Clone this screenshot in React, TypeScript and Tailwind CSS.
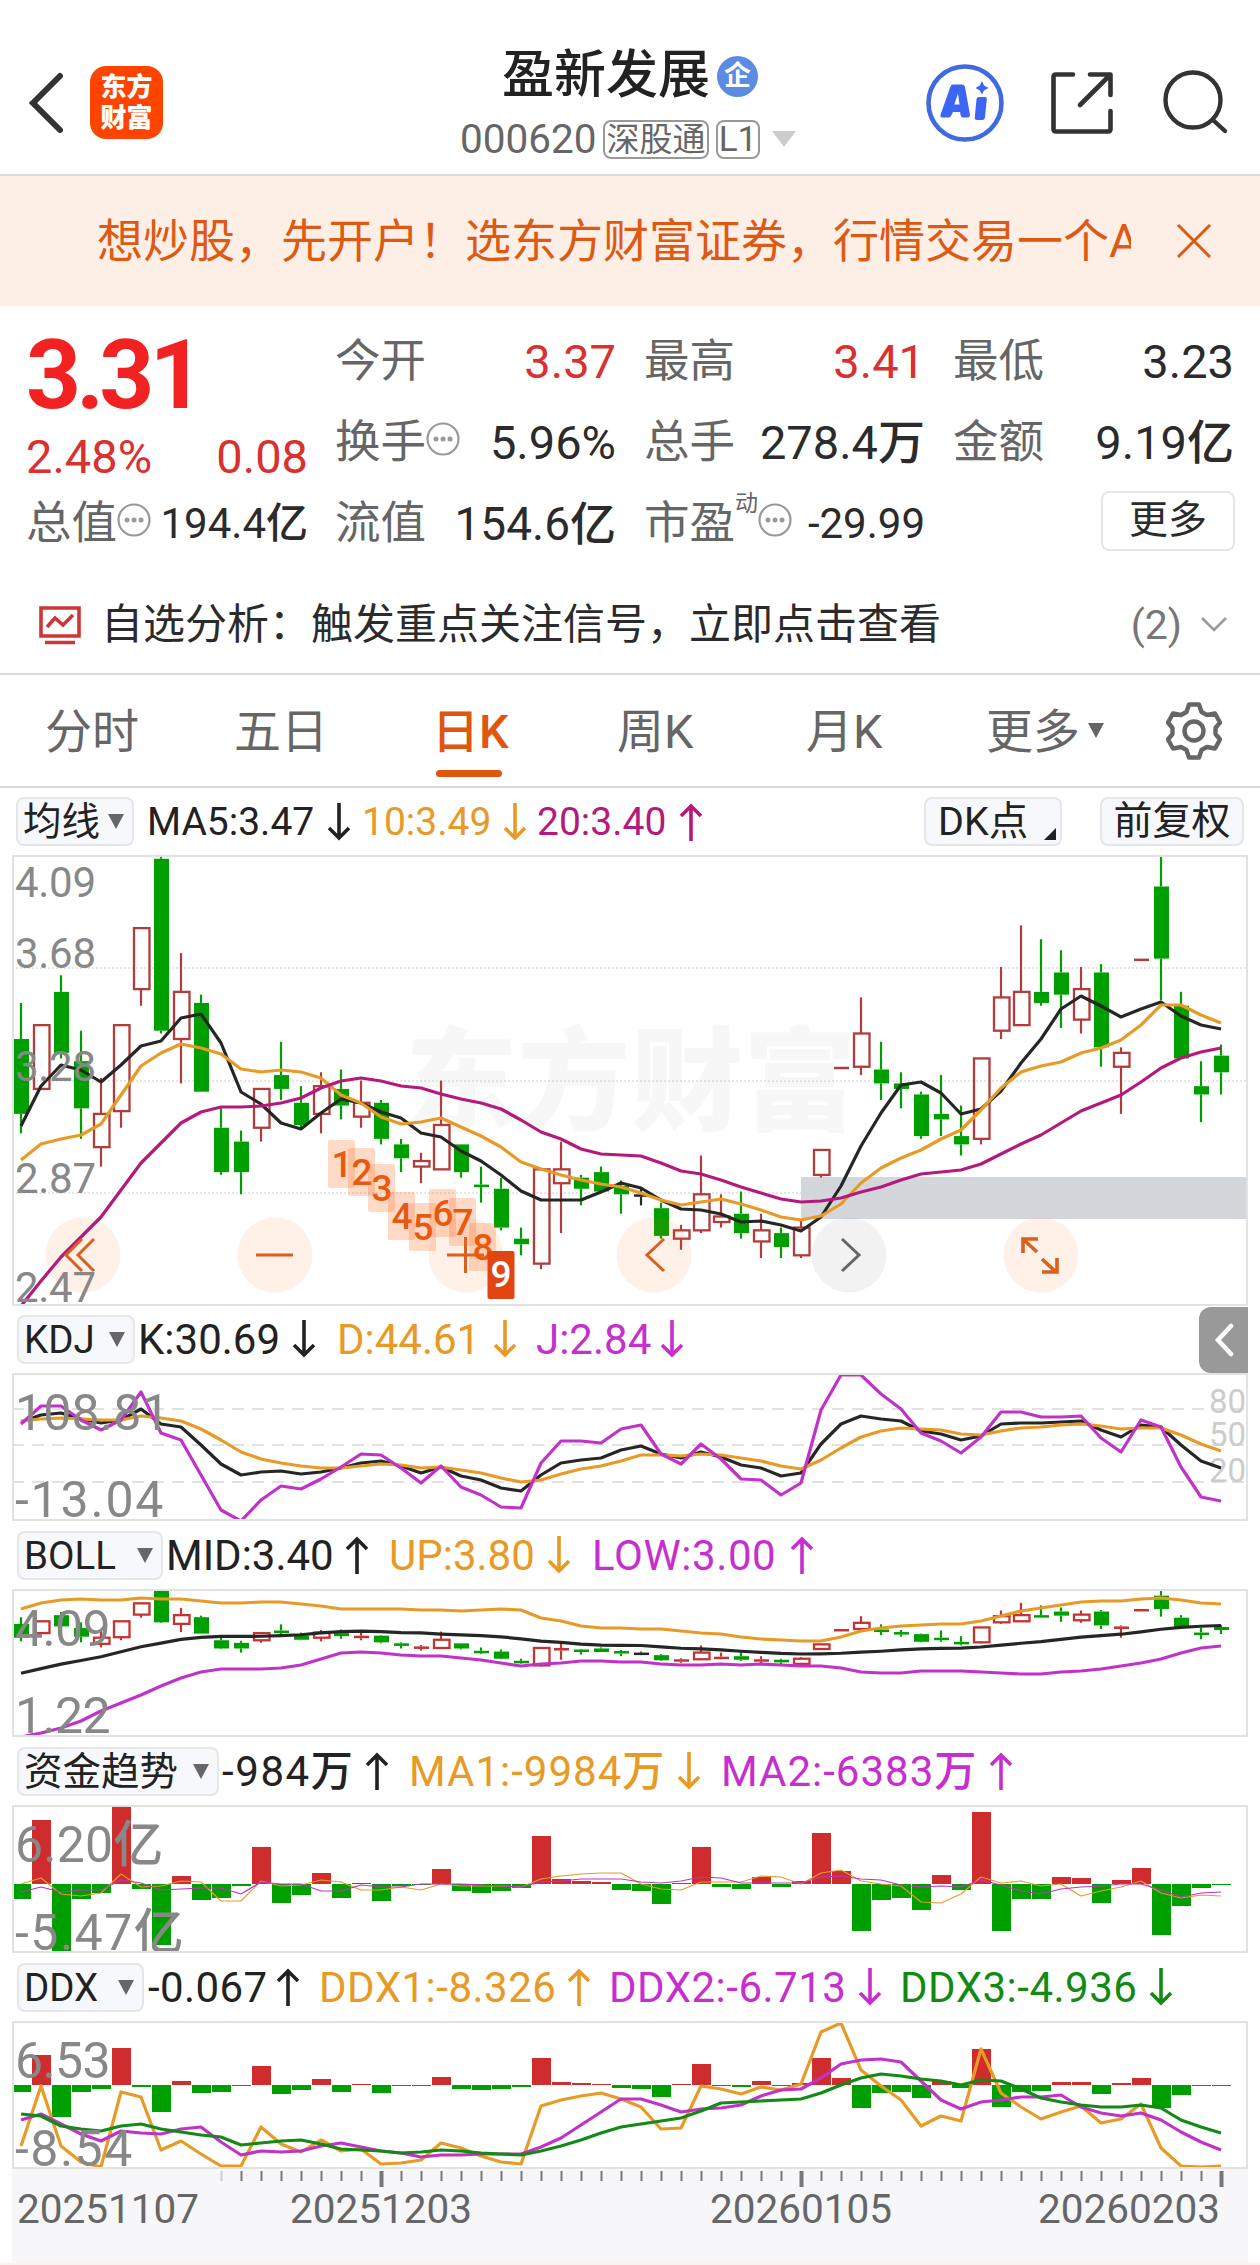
import type { ReactNode } from 'react';

type Candle = [open: number, close: number, high: number, low: number];

// daily K, oldest first
const candles: Candle[] = [
  [3.43, 3.16, 3.56, 3.09], [3.25, 3.48, 3.48, 3.25], [3.6, 3.38, 3.66, 3.36], [3.35, 3.18, 3.46, 3.07],
  [3.04, 3.16, 3.29, 2.97], [3.17, 3.48, 3.48, 3.11], [3.61, 3.83, 3.83, 3.55], [4.08, 3.46, 4.09, 3.45],
  [3.43, 3.6, 3.74, 3.27], [3.56, 3.24, 3.59, 3.24], [3.11, 2.95, 3.18, 2.94], [3.06, 2.95, 3.1, 2.87],
  [3.11, 3.25, 3.25, 3.06], [3.3, 3.25, 3.42, 3.21], [3.2, 3.12, 3.26, 3.11], [3.16, 3.26, 3.31, 3.09],
  [3.25, 3.19, 3.32, 3.14], [3.15, 3.2, 3.28, 3.11], [3.2, 3.07, 3.21, 3.05], [3.05, 3.0, 3.07, 2.95],
  [2.97, 2.99, 3.02, 2.91], [2.96, 3.12, 3.28, 2.96], [3.05, 2.95, 3.05, 2.93], [2.905, 2.9, 2.97, 2.84],
  [2.89, 2.75, 2.93, 2.74], [2.71, 2.69, 2.75, 2.65], [2.62, 2.96, 2.96, 2.6], [2.91, 2.96, 3.06, 2.73],
  [2.93, 2.89, 2.94, 2.83], [2.95, 2.88, 2.97, 2.88], [2.9, 2.87, 2.92, 2.8], [2.87, 2.87, 2.89, 2.83],
  [2.82, 2.72, 2.84, 2.71], [2.71, 2.74, 2.76, 2.67], [2.74, 2.87, 3.01, 2.73], [2.77, 2.79, 2.87, 2.75],
  [2.8, 2.73, 2.88, 2.71], [2.7, 2.74, 2.8, 2.64], [2.73, 2.68, 2.75, 2.64], [2.65, 2.75, 2.78, 2.64],
  [2.94, 3.03, 3.03, 2.93], [3.329, 3.33, 3.33, 3.33], [3.33, 3.45, 3.58, 3.3], [3.32, 3.27, 3.42, 3.21],
  [3.27, 3.25, 3.31, 3.18], [3.23, 3.08, 3.24, 3.07], [3.16, 3.14, 3.3, 3.08], [3.08, 3.05, 3.19, 3.01],
  [3.07, 3.36, 3.36, 3.05], [3.46, 3.58, 3.69, 3.43], [3.48, 3.6, 3.84, 3.48], [3.6, 3.56, 3.79, 3.55],
  [3.67, 3.59, 3.75, 3.47], [3.5, 3.61, 3.69, 3.45], [3.67, 3.4, 3.7, 3.33], [3.33, 3.38, 3.4, 3.16],
  [3.719, 3.72, 3.72, 3.72], [3.98, 3.72, 4.09, 3.57], [3.55, 3.36, 3.6, 3.36], [3.26, 3.23, 3.35, 3.13],
  [3.37, 3.31, 3.41, 3.23],
];

const ma5 = [270, 230, 209, 214, 226, 209, 190, 185, 162, 158, 187, 236, 248, 267, 273, 257, 243, 247, 256, 262, 277, 281, 295, 305, 319, 335, 344, 344, 344, 336, 327, 332, 344, 353, 354, 358, 366, 365, 369, 375, 361, 330, 290, 257, 229, 226, 237, 258, 253, 235, 207, 183, 153, 140, 150, 161, 153, 146, 160, 169, 173];
const ma10 = [304, 288, 283, 279, 268, 239, 210, 197, 188, 192, 198, 213, 216, 214, 216, 222, 239, 247, 261, 268, 266, 262, 271, 280, 291, 306, 313, 319, 324, 328, 331, 337, 344, 349, 346, 343, 348, 354, 361, 364, 360, 348, 327, 312, 302, 294, 283, 274, 254, 232, 216, 210, 206, 197, 192, 184, 169, 149, 149, 159, 167];
const ma20 = [450, 425, 401, 381, 361, 334, 307, 287, 267, 256, 251, 251, 250, 247, 242, 232, 225, 222, 225, 230, 232, 238, 243, 247, 253, 264, 276, 283, 293, 298, 299, 300, 307, 315, 318, 324, 331, 337, 343, 346, 345, 342, 336, 331, 324, 318, 316, 314, 308, 298, 288, 279, 267, 255, 247, 239, 226, 212, 202, 196, 192];

const kdjK = [48, 41, 39, 45, 49, 46, 35, 50, 53, 71, 90, 101, 98, 97, 100, 98, 94, 89, 87, 92, 99, 93, 102, 106, 114, 117, 101, 89, 86, 84, 76, 72, 80, 84, 78, 83, 91, 94, 102, 99, 70, 50, 42, 45, 47, 57, 60, 66, 62, 50, 49, 49, 48, 47, 56, 63, 51, 53, 71, 87, 94];
const kdjD = [47, 45, 44, 45, 46, 46, 42, 44, 47, 55, 66, 78, 85, 89, 92, 94, 94, 92, 90, 91, 94, 93, 96, 99, 104, 108, 106, 100, 95, 92, 87, 81, 81, 82, 80, 81, 84, 87, 92, 95, 86, 74, 63, 57, 54, 55, 56, 60, 61, 57, 54, 53, 51, 50, 52, 55, 54, 54, 61, 70, 77];
const kdjJ = [50, 32, 32, 46, 56, 46, 18, 59, 66, 101, 136, 147, 126, 112, 115, 105, 93, 80, 81, 94, 109, 92, 113, 121, 133, 134, 89, 67, 67, 69, 55, 51, 80, 90, 70, 85, 105, 106, 121, 109, 36, 1, 1, 20, 35, 59, 67, 79, 63, 38, 38, 43, 43, 42, 64, 78, 46, 53, 93, 123, 127];

const bollUp = [19, 13, 10, 9, 10, 10, 8, 9, 9, 11, 13, 13, 12, 12, 14, 16, 19, 19, 19, 19, 20, 20, 21, 20, 19, 20, 28, 31, 36, 38, 38, 39, 39, 41, 43, 44, 47, 49, 50, 51, 51, 47, 41, 38, 36, 35, 34, 34, 31, 26, 21, 18, 15, 12, 11, 11, 9, 8, 10, 13, 14];
const bollMid = ma20.map((y) => y * 0.185);
const bollLow = [147, 143, 138, 131, 121, 113, 105, 96, 88, 82, 79, 79, 79, 78, 75, 69, 63, 62, 63, 65, 66, 66, 68, 70, 73, 76, 74, 73, 71, 71, 72, 72, 74, 75, 75, 74, 75, 74, 75, 76, 76, 78, 82, 83, 83, 81, 81, 81, 82, 83, 84, 84, 82, 81, 79, 76, 73, 69, 63, 58, 56];

const funds = [-15, 64, -69, -15, -9, 78, -5, -61, 8, -16, -14, -2, 37, -19, -11, 11, -14, 1, -17, -2, -1, 15, -7, -9, -7, -4, 48, 5, 3, 2, -6, -7, -20, 1, 37, -3, -5, 7, -3, 3, 51, 13, -47, -16, -14, -26, 9, -6, 72, -47, -15, -15, 7, 6, -19, 4, 16, -51, -22, -4, -1];
const fundMa1 = [78, 72, 88, 90, 87, 68, 81, 80, 75, 76, 95, 95, 75, 80, 79, 74, 76, 84, 84, 81, 84, 78, 80, 80, 80, 81, 73, 70, 68, 67, 67, 78, 83, 84, 76, 76, 76, 70, 71, 78, 67, 64, 75, 78, 80, 96, 97, 88, 71, 77, 75, 80, 78, 90, 85, 81, 75, 87, 92, 89, 90];
const fundMa2 = [86, 81, 86, 84, 84, 74, 77, 84, 83, 82, 82, 88, 76, 78, 78, 85, 85, 79, 81, 81, 78, 78, 78, 79, 80, 81, 76, 75, 73, 73, 73, 76, 77, 75, 71, 72, 77, 77, 77, 77, 71, 70, 73, 74, 79, 81, 80, 81, 74, 79, 85, 88, 83, 81, 80, 78, 78, 84, 91, 87, 86];

const ddx = [-7, 30, -32, -7, -4, 37, -2, -27, 4, -8, -7, -1, 19, -9, -5, 6, -7, 1, -8, -1, -1, 8, -4, -5, -4, -2, 27, 3, 2, 1, -3, -4, -12, 1, 21, -1, -2, 4, -1, 2, 27, 7, -23, -8, -7, -13, 4, -3, 36, -22, -7, -6, 3, 3, -9, 2, 7, -23, -10, -1, -1];
const ddx1 = [124, 64, 124, 140, 145, 70, 75, 128, 119, 132, 144, 144, 105, 122, 130, 118, 129, 127, 142, 141, 138, 121, 126, 134, 140, 142, 84, 78, 74, 71, 77, 85, 107, 106, 64, 67, 72, 65, 68, 62, 10, 1, 48, 64, 78, 104, 94, 99, 27, 71, 85, 97, 90, 84, 101, 97, 82, 126, 144, 145, 144];
const ddx2 = [98, 92, 102, 112, 119, 109, 111, 112, 107, 105, 120, 133, 129, 130, 129, 124, 121, 125, 129, 131, 135, 133, 133, 132, 132, 132, 125, 116, 103, 90, 77, 77, 83, 90, 87, 86, 83, 74, 68, 67, 56, 42, 38, 37, 40, 59, 78, 87, 80, 78, 75, 75, 73, 85, 91, 94, 91, 98, 110, 120, 128];
const ddx3 = [92, 94, 104, 107, 109, 104, 102, 107, 110, 113, 115, 123, 121, 119, 118, 122, 127, 128, 129, 131, 130, 128, 129, 131, 132, 133, 129, 124, 118, 111, 105, 102, 99, 96, 89, 81, 80, 79, 78, 77, 71, 63, 56, 52, 54, 57, 59, 63, 58, 59, 67, 76, 80, 83, 85, 85, 83, 86, 98, 105, 111];

const BLACK = '#262626';
const ORANGE = '#e89a26';
const MAGENTA = '#b5197c';
const PURPLE = '#c032c8';
const GREEN = '#009f00';
const DARK_GREEN = '#128a14';
const RED = '#cf2d2d';

const xAt = (i: number) => 9 + i * 20;

function Line({ ys, color, width = 3.2 }: { ys: number[]; color: string; width?: number }) {
  return (
    <polyline points={ys.map((y, i) => `${xAt(i)},${y}`).join(' ')} fill="none" stroke={color} strokeWidth={width} strokeLinejoin="round" />
  );
}

function Candles({ scale, hollow }: { scale: number; hollow: string }) {
  const y = (p: number) => (4.09 - p) * scale;
  return (
    <g>
      {candles.map(([open, close, high, low], i) => {
        const up = close > open;
        const color = open === close ? BLACK : up ? hollow : GREEN;
        const top = y(Math.max(open, close));
        const h = Math.max(Math.abs(y(open) - y(close)), 2.5);
        const x = xAt(i);
        return (
          <g key={i} stroke={color}>
            {high > Math.max(open, close) && <line x1={x} x2={x} y1={y(high)} y2={top} strokeWidth={2.2} />}
            {low < Math.min(open, close) && <line x1={x} x2={x} y1={top + h} y2={y(low)} strokeWidth={2.2} />}
            {up && h > 3 ? (
              <rect x={x - 7} y={top} width={15.5} height={h} fill="none" strokeWidth={2.3} />
            ) : (
              <rect x={x - 7} y={top} width={15} height={h} fill={color} stroke="none" />
            )}
          </g>
        );
      })}
    </g>
  );
}

function Bars({ data, base }: { data: number[]; base: number }) {
  return (
    <g>
      {data.map((v, i) => (
        <rect key={i} x={xAt(i) - 9} width={19} y={v > 0 ? base - v : base} height={Math.abs(v)} fill={v > 0 ? RED : GREEN} />
      ))}
    </g>
  );
}

function Arrow({ down = false }: { down?: boolean }) {
  return (
    <svg viewBox="0 0 24 38" className="h-[38px] w-6 shrink-0" fill="none" stroke="currentColor" strokeWidth={3.6}>
      <path d={down ? 'M12 0V35M2 25L12 35L22 25' : 'M12 38V3M2 13L12 3L22 13'} />
    </svg>
  );
}

type Item = { text: string; color: string; box: string; down?: boolean };

function Legend({ items }: { items: Item[] }) {
  return (
    <>
      {items.map((it) => (
        <div key={it.text} className={`flex shrink-0 items-center justify-between font-[450] ${it.box} ${it.color}`}>
          <span className="translate-y-px whitespace-nowrap">{it.text}</span>
          <Arrow down={it.down} />
        </div>
      ))}
    </>
  );
}

function Picker({ label, className }: { label: string; className: string }) {
  return (
    <button className={`flex h-[49px] shrink-0 items-center justify-between rounded-lg border-2 border-[#e4e6ea] bg-[#f7f8fb] pr-[8px] pl-[5px] text-[38.5px] leading-none whitespace-nowrap text-[#222] ${className}`}>
      <span className="translate-y-px">{label}</span>
      <svg viewBox="0 0 16 15" className="h-[15px] w-4" fill="#666"><path d="M0 0H16L8 15Z" /></svg>
    </button>
  );
}

function Panel({ height, className, children }: { height: number; className: string; children: ReactNode }) {
  return (
    <div className={`mx-3 border-2 border-[#e2e2e2] ${className}`}>
      <svg viewBox={`2 1 1232 ${height - 4}`} className="block h-full w-full overflow-hidden">{children}</svg>
    </div>
  );
}

function AxisLabel({ y, size = 50, spacing = -0.6, children }: { y: number; size?: number; spacing?: number; children: string }) {
  return <text x={3} y={y} fontSize={size} fontWeight={450} letterSpacing={spacing} fill="#888">{children}</text>;
}

function IndicatorRow({ label, picker, items }: { label: string; picker: string; items: Item[] }) {
  return (
    <div className="flex h-[68px] items-center pl-[17px] text-[42px] leading-none">
      <Picker label={label} className={picker} />
      <Legend items={items} />
    </div>
  );
}

function MoreDots() {
  return (
    <svg viewBox="0 0 34 34" className="h-[34px] w-[34px] shrink-0 -translate-y-1" fill="none" stroke="#999" strokeWidth={2.2}>
      <circle cx={17} cy={17} r={15.5} />
      <g fill="#999" stroke="none"><circle cx={10} cy={17} r={2.5} /><circle cx={17} cy={17} r={2.5} /><circle cx={24} cy={17} r={2.5} /></g>
    </svg>
  );
}

function Quote({ label, value, color = 'text-[#2b2b2b]', size = 'text-[47px]', extra }: { label: string; value: string; color?: string; size?: string; extra?: ReactNode }) {
  return (
    <div className="flex h-[81px] items-center justify-between leading-none whitespace-nowrap">
      <span className="flex items-center text-[45.5px] text-[#666]">{label}{extra}</span>
      <span className={`font-[450] ${size} ${color}`}>{value}</span>
    </div>
  );
}

function Header() {
  return (
    <header className="flex h-[176px] items-start border-b-2 border-[#dcdcdc]">
      <div className="flex w-[460px] items-center pt-[66px] pl-[28px]">
        <svg viewBox="0 0 36 62" className="h-[62px] w-9" fill="none" stroke="#333" strokeWidth={6} strokeLinecap="round">
          <path d="M32 4L5 31L32 58" />
        </svg>
        <div className="ml-[26px] flex h-[73px] w-[73px] flex-col items-center justify-center rounded-2xl bg-[#ff4400] text-[26px] leading-[31px] font-black text-white">
          <span>东方</span>
          <span>财富</span>
        </div>
      </div>
      <div className="w-[340px] pt-[48px]">
        <div className="flex items-center pl-[42px]">
          <span className="text-[52px] leading-[56px] font-medium whitespace-nowrap text-[#222]">盈新发展</span>
          <span className="ml-[7px] flex h-[41px] w-[41px] items-center justify-center rounded-full bg-[#5b8be3] text-[27px] leading-none font-bold text-white">企</span>
        </div>
        <div className="mt-[14px] flex h-[42px] items-center leading-none whitespace-nowrap text-[#666]">
          <span className="w-[143px] text-[40.5px]">000620</span>
          <span className="flex h-[39px] w-[106px] items-center justify-center rounded-lg border-2 border-[#999] text-[33px]">深股通</span>
          <span className="ml-[7px] flex h-[39px] w-[44px] items-center justify-center rounded-lg border-2 border-[#999] text-[35px]">L1</span>
          <svg viewBox="0 0 24 16" className="ml-3 h-4 w-6" fill="#ccc"><path d="M0 0H24L12 16Z" /></svg>
        </div>
      </div>
      <div className="flex items-center pt-[63px] pl-[125px]">
        <svg viewBox="0 0 80 80" className="h-20 w-20">
          <circle cx={40} cy={40} r={36.5} fill="none" stroke="#4169e1" strokeWidth={4.6} />
          <path fill="#3b66f5" fillRule="evenodd" d="M28 21.5H37Q39.500 21.500 40 24L45 52Q45 54.500 42.500 54.500H38Q36 54.500 35.600 52L35 49H28L26 53Q25 54.500 23 54.500H17Q14.800 54 15.600 51.500L25.500 23.500Q26.300 21.500 28 21.500ZM33 30.500L29.300 41.500H34.500Z" />
          <path fill="#3b66f5" d="M54 34H60Q62 34 61.800 36L60 54Q59.700 57 57.500 57H52Q49.600 57 49.800 54.500L51.500 36Q51.800 34 54 34ZM57 18L59 22.500L63.500 25L59 27.500L57 31.500L54.800 27.500L50.500 25L54.800 22.500Z" />
        </svg>
        <svg viewBox="0 0 64 64" className="ml-[45px] h-16 w-16" fill="none" stroke="#333" strokeWidth={4.6} strokeLinecap="round" strokeLinejoin="round">
          <path d="M23 3.500H6Q3.500 3.500 3.500 6V58Q3.500 60.500 6 60.500H58Q60.500 60.500 60.500 58V40M40 3.500H60.500V24M60 4L30 34" />
        </svg>
        <svg viewBox="0 0 68 68" className="ml-[47px] h-[68px] w-[68px]" fill="none" stroke="#333" strokeWidth={4.4} strokeLinecap="round">
          <circle cx={32} cy={31} r={27.500} />
          <path d="M52 51L64 62" />
        </svg>
      </div>
    </header>
  );
}

function Summary() {
  return (
    <section className="h-[369px] border-b-2 border-[#d8dade] pt-[15px]">
      <div className="flex pl-[26px]">
        <div className="w-[282px]">
          <div className="h-[100px] text-[96px] leading-[108px] font-bold tracking-[-0.05em] text-[#f22222]">3.31</div>
          <div className="flex h-[70px] items-center justify-between text-[47px] leading-none font-[450] text-[#d93030]">
            <span>2.48%</span>
            <span>0.08</span>
          </div>
          <div className="-mt-2"><Quote label="总值" value="194.4亿" size="text-[42px]" extra={<MoreDots />} /></div>
        </div>
        <div className="ml-[27px] w-[281px]">
          <Quote label="今开" value="3.37" color="text-[#d93030]" />
          <Quote label="换手" value="5.96%" extra={<MoreDots />} />
          <Quote label="流值" value="154.6亿" size="text-[46px]" />
        </div>
        <div className="ml-[28px] w-[281px]">
          <Quote label="最高" value="3.41" color="text-[#d93030]" />
          <Quote label="总手" value="278.4万" />
          <Quote label="市盈" value="-29.99" size="text-[42px]" extra={<><span className="-translate-y-5 text-[23px]">动</span><MoreDots /></>} />
        </div>
        <div className="ml-[28px] w-[281px]">
          <Quote label="最低" value="3.23" />
          <Quote label="金额" value="9.19亿" />
          <div className="flex h-[81px] items-center justify-end">
            <button className="-mr-px h-[60px] w-[134px] -translate-y-[3px] rounded-lg border-2 border-[#e6e6e6] text-[39px] leading-none text-[#2b2b2b]">更多</button>
          </div>
        </div>
      </div>
      <div className="mt-[31px] flex h-[60px] items-center pl-[39px] leading-none">
        <svg viewBox="0 0 42 40" className="h-10 w-[42px]" fill="none" stroke="#cf3535" strokeWidth={3.6}>
          <path d="M2 3H40V31H2ZM6 37.500H36" />
          <path d="M8 22L16 13L24 20L34 10" />
        </svg>
        <span className="ml-5 flex-1 text-[42px] whitespace-nowrap text-[#2b2b2b]">自选分析：触发重点关注信号，立即点击查看</span>
        <span className="text-[41px] text-[#777]">(2)</span>
        <svg viewBox="0 0 26 16" className="mr-[33px] ml-[19px] h-4 w-[26px]" fill="none" stroke="#999" strokeWidth={2.6}><path d="M1 1L13 13L25 1" /></svg>
      </div>
    </section>
  );
}

function Tabs() {
  return (
    <nav className="flex h-[113px] items-center border-b-2 border-[#d8dade] pl-[45px] text-[47px] leading-none whitespace-nowrap text-[#666]">
      <span className="w-[189px] translate-y-px">分时</span>
      <span className="w-[198px] translate-y-px">五日</span>
      <span className="relative w-[185px] translate-y-px font-medium text-[#e0560f]">
        日K
        <span className="absolute top-[62px] left-[4px] h-[7px] w-[66px] rounded-full bg-[#e0560f]" />
      </span>
      <span className="w-[189px] translate-y-px">周K</span>
      <span className="w-[180px] translate-y-px">月K</span>
      <span className="translate-y-px">更多</span>
      <svg viewBox="0 0 16 15" className="ml-2 h-[15px] w-4" fill="#666"><path d="M0 0H16L8 15Z" /></svg>
      <svg viewBox="0 0 56 58" className="ml-[62px] h-[58px] w-14" fill="none" stroke="#666" strokeWidth={4.4} strokeLinejoin="round">
        <path d="M23 2.500H33L35.500 10L41 13L49 11.500L54 20.500L49.500 26V32L54 37.500L49 46.500L41 45L35.500 48L33 55.500H23L20.500 48L15 45L7 46.500L2 37.500L6.500 32V26L2 20.500L7 11.500L15 13L20.500 10Z" />
        <circle cx={28} cy={29} r={9.5} />
      </svg>
    </nav>
  );
}

// TD sequential counter drawn under the candles
const counts: [number, number][] = [[316, 284], [336, 292], [356, 308], [376, 336], [397, 347], [417, 333], [437, 342], [457, 367]];

function MainChart() {
  return (
    <Panel height={451} className="h-[451px]">
      <text x={393} y={266} fontSize={112} fontWeight={900} fill="#f7f7f7" letterSpacing={1}>东方财富</text>
      {[112, 225, 337].map((y) => <line key={y} x1={0} x2={1236} y1={y} y2={y} stroke="#ccc" strokeDasharray="2 2" />)}
      <rect x={789} y={321} width={446} height={42} fill="#d3d6db" />
      <Candles scale={277.3} hollow="#b23c3c" />
      {[71, 263, 454, 642, 1029].map((x) => <circle key={x} cx={x} cy={399} r={37.5} fill="#ff6a20" fillOpacity={0.1} />)}
      <circle cx={837} cy={399} r={37.5} fill="#000" fillOpacity={0.05} />
      <Line ys={ma5} color={BLACK} />
      <Line ys={ma10} color={ORANGE} />
      <Line ys={ma20} color={MAGENTA} />
      <AxisLabel y={41} size={42} spacing={-0.3}>4.09</AxisLabel>
      <AxisLabel y={112} size={42} spacing={-0.3}>3.68</AxisLabel>
      <AxisLabel y={225} size={42} spacing={-0.3}>3.28</AxisLabel>
      <AxisLabel y={337} size={42} spacing={-0.3}>2.87</AxisLabel>
      <AxisLabel y={446} size={42} spacing={-0.3}>2.47</AxisLabel>
      <g fill="none" stroke="#d9601f" strokeWidth={3}>
        <path d="M70 383L54 399L70 415M82 383L66 399L82 415" />
        <path d="M244 399H281M435 399H472M453.500 381V417" />
        <path d="M652 383L635 399L652 415" />
        <path d="M1011 397V383H1026M1012 384L1025 396M1030 403L1044 416M1045 402V416H1030" strokeWidth={3.6} />
        <path d="M830 383L847 399L830 415" stroke="#666" />
      </g>
      {counts.map(([x, y], i) => (
        <g key={i}>
          <rect x={x} y={y} width={27} height={48} rx={2} fill="#ff6a20" fillOpacity={0.25} />
          <text x={x + 14} y={y + 36.5} fontSize={37} fontWeight={500} textAnchor="middle" fill="#e8590f">{i + 1}</text>
        </g>
      ))}
      <rect x={475.5} y={395} width={27} height={48} rx={2} fill="#e24512" />
      <text x={489} y={431} fontSize={37} fontWeight={500} textAnchor="middle" fill="#fff">9</text>
    </Panel>
  );
}

function TimeAxis() {
  return (
    <div className="mx-3 h-[94px] bg-[#f7f7fa]">
      <svg viewBox="0 0 1236 20" className="block h-5 w-full">
        {Array.from({ length: 51 }, (_, k) => k + 10).map((i) => {
          const major = i === 18 || i === 39 || i === 60;
          return <line key={i} x1={xAt(i) + 0.5} x2={xAt(i) + 0.5} y1={2} y2={major ? 18 : 12} stroke={i === 10 ? '#ccc' : '#777'} strokeWidth={major ? 4 : 2} />;
        })}
      </svg>
      <div className="flex pl-[5px] text-[40.5px] leading-[40px] text-[#666]">
        <span className="w-[273px]">20251107</span>
        <span className="w-[420px]">20251203</span>
        <span className="w-[328px]">20260105</span>
        <span>20260203</span>
      </div>
    </div>
  );
}

export default function App() {
  return (
    <div className="h-[2265px] w-[1260px] overflow-hidden bg-white font-['Roboto','Noto_Sans_CJK_SC',sans-serif]">
      <Header />
      <div className="flex h-[130px] items-center bg-[#fdeee6] pl-[97px] text-[#dd5a14]">
        <span className="w-[1034px] overflow-hidden text-[46px] leading-[66px] whitespace-nowrap">想炒股，先开户！选东方财富证券，行情交易一个APP</span>
        <svg viewBox="0 0 34 34" className="ml-[46px] h-[34px] w-[34px]" fill="none" stroke="currentColor" strokeWidth={3}><path d="M1 1L33 33M33 1L1 33" /></svg>
      </div>
      <Summary />
      <Tabs />

      <div className="flex h-[67px] items-center pl-4 text-[39px] leading-none">
        <Picker label="均线" className="w-[118px]" />
        <Legend
          items={[
            { text: 'MA5:3.47', color: 'text-[#222]', box: 'ml-[13px] w-[204px]', down: true },
            { text: '10:3.49', color: 'text-[#e89a26]', box: 'ml-[11px] w-[165px]', down: true },
            { text: '20:3.40', color: 'text-[#b5197c]', box: 'ml-[10px] w-[166px]' },
          ]}
        />
        <button className="relative ml-[221px] h-[49px] w-[138px] rounded-lg border-2 border-[#e4e6ea] bg-[#f7f8fb] pl-[12px] text-left text-[39.5px] leading-none whitespace-nowrap text-[#222]">
          DK点
          <svg viewBox="0 0 12 12" className="absolute right-1 bottom-1 h-3 w-3" fill="#222"><path d="M12 0V12H0Z" /></svg>
        </button>
        <button className="ml-[38px] h-[49px] w-[144px] rounded-lg border-2 border-[#e4e6ea] bg-[#f7f8fb] text-[39px] leading-none whitespace-nowrap text-[#222]">前复权</button>
      </div>
      <MainChart />

      <div className="flex h-[67px] items-end justify-between pr-3">
        <IndicatorRow
          label="KDJ"
          picker="w-[118px]"
          items={[
            { text: 'K:30.69', color: 'text-[#222]', box: 'ml-[3px] w-[178px]', down: true },
            { text: 'D:44.61', color: 'text-[#e89a26]', box: 'ml-[21px] w-[180px]', down: true },
            { text: 'J:2.84', color: 'text-[#c62fce]', box: 'ml-[19px] w-[148px]', down: true },
          ]}
        />
        <button className="flex h-[66px] w-[49px] items-center justify-center rounded-l-xl bg-[#999]">
          <svg viewBox="0 0 20 36" className="h-9 w-5" fill="none" stroke="#fff" strokeWidth={4.5} strokeLinecap="round"><path d="M17 4L4 18L17 32" /></svg>
        </button>
      </div>
      <Panel height={148} className="h-[148px]">
        {[35, 71, 108].map((y) => <line key={y} x1={0} x2={1236} y1={y} y2={y} stroke="#d8d8d8" strokeWidth={1.5} strokeDasharray="12 8" />)}
        <g fontSize={33} fill="#ccc" textAnchor="end">
          <text x={1234} y={39}>80</text>
          <text x={1234} y={72}>50</text>
          <text x={1234} y={108}>20</text>
        </g>
        <Line ys={kdjK} color={BLACK} />
        <Line ys={kdjD} color={ORANGE} />
        <Line ys={kdjJ} color={PURPLE} />
        <AxisLabel y={56} spacing={0.2}>108.81</AxisLabel>
        <AxisLabel y={143} spacing={1.8}>-13.04</AxisLabel>
      </Panel>

      <IndicatorRow
        label="BOLL"
        picker="w-[146px]"
        items={[
          { text: 'MID:3.40', color: 'text-[#222]', box: 'ml-[3px] w-[203px]' },
          { text: 'UP:3.80', color: 'text-[#e89a26]', box: 'ml-[20px] w-[182px]', down: true },
          { text: 'LOW:3.00', color: 'text-[#c62fce]', box: 'ml-[21px] w-[222px] tracking-[0.6px]' },
        ]}
      />
      <Panel height={148} className="h-[148px]">
        <Candles scale={51.3} hollow="#c53434" />
        <Line ys={bollMid} color={BLACK} />
        <Line ys={bollUp} color={ORANGE} />
        <Line ys={bollLow} color={PURPLE} />
        <AxisLabel y={56}>4.09</AxisLabel>
        <AxisLabel y={143}>1.22</AxisLabel>
      </Panel>

      <IndicatorRow
        label="资金趋势"
        picker="w-[202px]"
        items={[
          { text: '-984万', color: 'text-[#222]', box: 'ml-[3px] w-[167px] tracking-[1.6px]' },
          { text: 'MA1:-9984万', color: 'text-[#e89a26]', box: 'ml-[20px] w-[292px] tracking-[1px]', down: true },
          { text: 'MA2:-6383万', color: 'text-[#c62fce]', box: 'ml-[20px] w-[292px] tracking-[1px]' },
        ]}
      />
      <Panel height={148} className="h-[148px]">
        <Bars data={funds} base={78} />
        <Line ys={fundMa1} color={ORANGE} width={1.2} />
        <Line ys={fundMa2} color={PURPLE} width={1.2} />
        <AxisLabel y={56} spacing={0.2}>6.20亿</AxisLabel>
        <AxisLabel y={144} spacing={1.5}>-5.47亿</AxisLabel>
      </Panel>

      <IndicatorRow
        label="DDX"
        picker="w-[127px]"
        items={[
          { text: '-0.067', color: 'text-[#222]', box: 'ml-[4px] w-[152px] tracking-[0.4px]' },
          { text: 'DDX1:-8.326', color: 'text-[#e89a26]', box: 'ml-[19px] w-[272px] tracking-[0.5px]' },
          { text: 'DDX2:-6.713', color: 'text-[#c62fce]', box: 'ml-[18px] w-[273px] tracking-[0.5px]', down: true },
          { text: 'DDX3:-4.936', color: 'text-[#128a14]', box: 'ml-[18px] w-[273px] tracking-[0.5px]', down: true },
        ]}
      />
      <Panel height={148} className="h-[148px]">
        <Bars data={ddx} base={63} />
        <Line ys={ddx1} color={ORANGE} />
        <Line ys={ddx2} color={PURPLE} />
        <Line ys={ddx3} color={DARK_GREEN} />
        <AxisLabel y={56}>6.53</AxisLabel>
        <AxisLabel y={144} spacing={1.5}>-8.54</AxisLabel>
      </Panel>

      <TimeAxis />
      <div className="h-1 bg-[#fff0ec]" />
    </div>
  );
}
